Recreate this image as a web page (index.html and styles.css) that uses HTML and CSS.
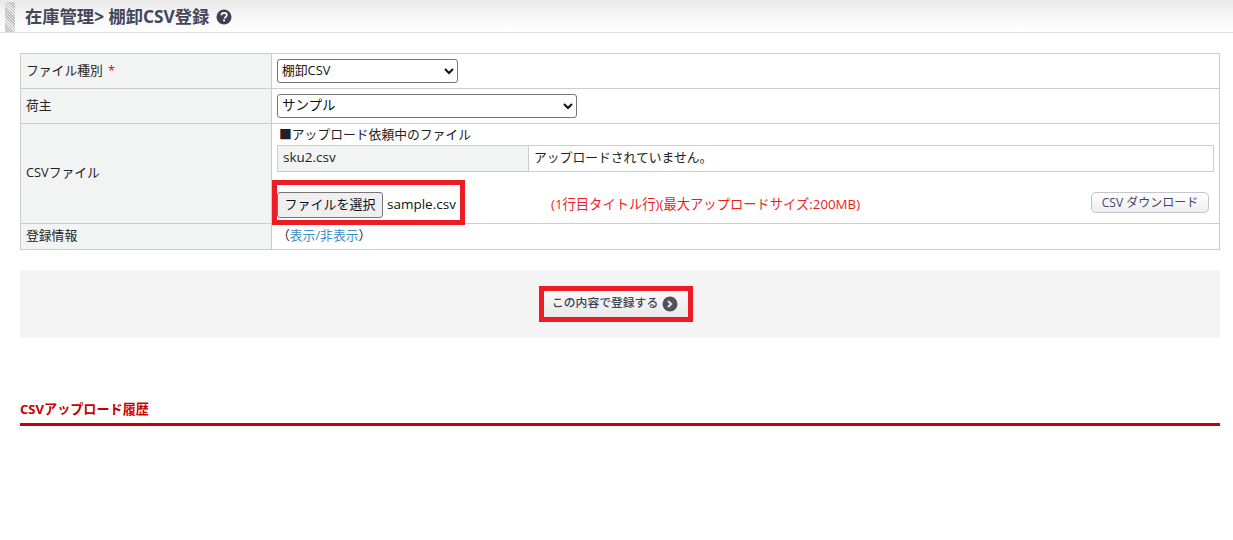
FILE: index.html
```html
<!DOCTYPE html>
<html lang="ja">
<head>
<meta charset="utf-8">
<title>棚卸CSV登録</title>
<link rel="stylesheet" href="styles.css">
</head>
<body>
<header class="page-head">
  <span class="hatch"></span>
  <h1 class="page-title">在庫管理&gt; 棚卸CSV登録</h1>
  <svg class="help" width="16" height="16" viewBox="0 0 16 16"><circle cx="8" cy="8" r="7.5" fill="#3f4257"/><path d="M5.3 6.3C5.4 4.7 6.5 3.8 8.1 3.8c1.6 0 2.7.9 2.7 2.2 0 1-.5 1.6-1.4 2.2-.6.4-.8.7-.8 1.3" fill="none" stroke="#fff" stroke-width="1.8"/><rect x="7.1" y="10.5" width="1.9" height="1.9" fill="#fff"/></svg>
</header>
<main class="content">
  <table class="form-table">
    <tr class="row-a">
      <th>ファイル種別 <span class="req">*</span></th>
      <td><select class="sel sel-short"><option>棚卸CSV</option></select></td>
    </tr>
    <tr class="row-a">
      <th>荷主</th>
      <td><select class="sel sel-long"><option>サンプル</option></select></td>
    </tr>
    <tr class="row-file">
      <th>CSVファイル</th>
      <td class="file-cell">
        <div class="pending-title">■アップロード依頼中のファイル</div>
        <table class="pending">
          <tr><th>sku2.csv</th><td>アップロードされていません。</td></tr>
        </table>
        <div class="file-row">
          <span class="file-pick">
            <button class="file-btn" type="button">ファイルを選択</button>
            <span class="file-name">sample.csv</span>
            <span class="mark mark-file"></span>
          </span>
          <span class="file-note">(1行目タイトル行)(最大アップロードサイズ:200MB)</span>
          <button class="dl-btn" type="button">CSV ダウンロード</button>
        </div>
      </td>
    </tr>
    <tr class="row-info">
      <th>登録情報</th>
      <td class="info-cell">（<a href="#">表示/非表示</a>）</td>
    </tr>
  </table>
  <div class="submit-bar">
    <button class="submit" type="button">この内容で登録する
      <svg class="go" width="16" height="16" viewBox="0 0 16 16"><circle cx="8" cy="8" r="7.5" fill="#50505f"/><path d="M6 5l3.2 3L6 11" fill="none" stroke="#e8e8e8" stroke-width="2"/></svg>
      <span class="mark mark-submit"></span>
    </button>
  </div>
  <h2 class="section-title">CSVアップロード履歴</h2>
</main>
</body>
</html>
```
FILE: styles.css
```css
* { box-sizing: border-box; }
html, body { margin: 0; padding: 0; background: #fff; }
body {
  font-family: "Open Sans", "Noto Sans CJK JP", sans-serif;
  font-size: 12.8px;
  color: #222;
  height: 540px;
  overflow: hidden;
}
.page-head {
  height: 33px;
  display: flex;
  align-items: center;
  padding: 1px 0 0 5px;
  border-bottom: 1px solid #ddd;
  background: linear-gradient(#e9e9e9, #f6f6f6 50%, #fff);
}
.hatch {
  width: 10px;
  height: 30px;
  background: repeating-linear-gradient(45deg, #bbb 0 1px, #eee 1px 2px);
}
.page-title {
  margin: 0 0 0 10px;
  font-size: 17.3px;
  font-weight: 700;
  color: #44465a;
  line-height: 30px;
}
.help { margin-left: 7px; }
.content { padding: 20px 13px 0 20px; }
.form-table {
  width: 1200px;
  border-collapse: collapse;
  table-layout: fixed;
}
.form-table > tbody > tr > th,
.form-table > tbody > tr > td {
  border: 1px solid #ccc;
  padding: 0 5px;
}
.form-table > tbody > tr > th {
  width: 251px;
  background: #f2f4f3;
  font-weight: 400;
  text-align: left;
  padding-bottom: 3px;
}
.row-a { height: 35px; }
.row-file { height: 100px; }
.row-file > th { padding-bottom: 5px !important; }
.row-info { height: 26px; }
.row-info > th { padding-bottom: 5px !important; }
.req { color: #e60012; margin-left: 2px; }
.sel {
  display: block;
  height: 24px;
  font: inherit;
  color: #111;
  background: #fff;
  border: 1px solid #767676;
  border-radius: 3px;
  padding: 0 0 2px 0;
}
.sel-short { width: 181px; }
.sel-long { width: 300px; font-size: 13.5px; padding-bottom: 3px; }
.file-cell { vertical-align: top; }
.pending-title { height: 21px; line-height: 21px; padding-left: 2px; }
.pending {
  width: 937px;
  height: 27px;
  border-collapse: collapse;
  table-layout: fixed;
}
.pending th, .pending td { border: 1px solid #ccc; padding: 0 5px 5px; font-weight: 400; text-align: left; }
.pending th { width: 251px; background: #f2f4f3; font-size: 13.5px; padding-bottom: 4px; }
.file-row {
  display: flex;
  align-items: center;
  margin-top: 20px;
  height: 26px;
}
.file-pick { position: relative; display: flex; align-items: center; width: 274px; }
.file-btn {
  width: 106px;
  height: 26px;
  font: inherit;
  font-size: 13px;
  padding: 0 0 4px;
  color: #111;
  background: #efefef;
  border: 1px solid #767676;
  border-radius: 3px;
}
.file-name { margin-left: 4px; color: #111; padding-bottom: 3px; font-size: 13.5px; }
.mark {
  position: absolute;
  border: 5px solid #ed1c24;
  pointer-events: none;
}
.mark-file { left: -5px; top: -12px; width: 193px; height: 45px; }
.file-note { color: #f01c24; font-size: 13.3px; width: 540px; padding-bottom: 4px; }
.dl-btn {
  align-self: flex-start;
  width: 118px;
  height: 21px;
  font: inherit;
  font-size: 12px;
  padding: 0 0 2px;
  color: #444660;
  background: linear-gradient(#fff, #eeeef2);
  border: 1px solid #c4c4d0;
  border-radius: 5px;
}
.info-cell { padding: 0 5px 5px !important; color: #222; }
.info-cell a { color: #3a8fc8; text-decoration: none; }
.submit-bar {
  width: 1200px;
  height: 68px;
  margin-top: 20px;
  background: #f4f4f4;
  display: flex;
  align-items: center;
  justify-content: center;
}
.submit {
  position: relative;
  display: flex;
  align-items: center;
  gap: 4px;
  width: 144px;
  height: 26px;
  padding: 0 0 5px 8px;
  margin-left: -8px;
  border: 0;
  font: inherit;
  font-size: 11.8px;
  font-weight: 500;
  white-space: nowrap;
  color: #3f4257;
  background: linear-gradient(#f9f9f9, #e9e9e9);
}
.go { margin-top: 4px; }
.mark-submit { left: -5px; top: -5px; width: 154px; height: 36px; }
.section-title {
  margin: 63px 0 0;
  width: 1200px;
  height: 25px;
  font-size: 13.1px;
  line-height: 17px;
  font-weight: 700;
  color: #c80000;
  border-bottom: 3px solid #c80000;
}
```
